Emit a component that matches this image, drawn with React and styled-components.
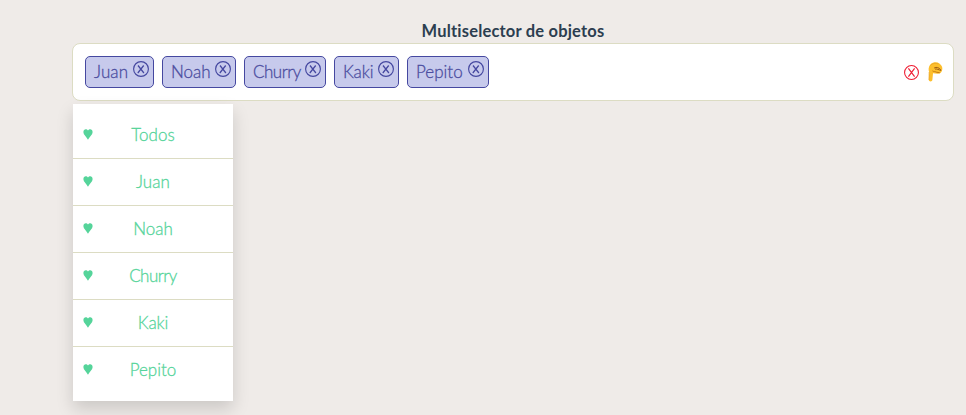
import React from 'react';
import styled, { createGlobalStyle } from 'styled-components';

const GlobalStyle = createGlobalStyle`
  * { box-sizing: border-box; }
  body {
    margin: 0;
    background: #efebe8;
    font-family: Lato, "Open Sans", sans-serif;
    font-size: 16px;
    color: #2c3e50;
    overflow: hidden;
    -webkit-font-smoothing: antialiased;
  }
`;

const Page = styled.main`
  height: 415px;
  padding: 20px 12px 0 72px;
`;

const Title = styled.h1`
  margin: 0;
  height: 23px;
  line-height: 23px;
  font-size: 16.5px;
  font-weight: 700;
  letter-spacing: 0.19px;
  text-align: center;
`;

const Field = styled.div`
  display: flex;
  align-items: center;
  justify-content: space-between;
  height: 58px;
  padding: 0 9px 0 12px;
  background: #fff;
  border: 1px solid #dcdcc3;
  border-radius: 8px;
`;

const Tags = styled.div`
  display: flex;
  gap: 8px;
`;

const Tag = styled.span`
  display: flex;
  justify-content: space-between;
  width: ${(p) => p.$width}px;
  height: 32px;
  padding: 0 4px 0 8px;
  line-height: 29px;
  font-size: 17px;
  font-weight: 300;
  letter-spacing: ${(p) => p.$tracking}px;
  white-space: nowrap;
  color: #4b4d9f;
  -webkit-text-stroke: 0.3px currentColor;
  background: #c7caec;
  border: 1px solid #4548a0;
  border-radius: 5px;
`;

const CloseMark = styled.svg`
  flex: none;
  width: ${(p) => p.$size}px;
  height: ${(p) => p.$size}px;
  margin-top: ${(p) => p.$top || 0}px;
  fill: none;
  stroke: ${(p) => p.$color};
`;

const Actions = styled.div`
  display: flex;
  align-items: center;
  gap: 7px;
`;

const Hand = styled.svg`
  width: 18px;
  height: 22px;
`;

const Menu = styled.ul`
  width: 160px;
  height: 297px;
  margin: 3px 0 0 1px;
  padding: 8px 0;
  list-style: none;
  background: #fff;
  box-shadow: 0 8px 16px rgba(0, 0, 0, 0.15);
`;

const Option = styled.li`
  display: grid;
  grid-template-columns: 30px 1fr 30px;
  align-items: center;
  height: 47px;
  color: #55d49a;
  border-bottom: 1px solid #dcdcc3;

  &:last-child {
    height: 46px;
    border-bottom: 0;
  }
`;

const Heart = styled.svg`
  width: 10px;
  height: 12px;
  margin: 0 0 2px 10px;
  fill: currentColor;
`;

const Label = styled.span`
  text-align: center;
  line-height: 22px;
  font-size: 17px;
  font-weight: 300;
  letter-spacing: ${(p) => p.$tracking}px;
  -webkit-text-stroke: 0.3px currentColor;
`;

const people = [
  { name: 'Juan', width: 69, tracking: 0.1 },
  { name: 'Noah', width: 74, tracking: 0 },
  { name: 'Churry', width: 82, tracking: -0.5 },
  { name: 'Kaki', width: 65, tracking: -0.1 },
  { name: 'Pepito', width: 82, tracking: 0 },
];

const options = [{ name: 'Todos', tracking: 0 }, ...people];

const crosses = {
  small: 'M5 4.500 10.900 12M10.700 4.500 4.800 12',
  large: 'M4.700 3.700 11.300 12.300M11.300 3.700 4.700 12.300',
};

function Close({ size, top, color, cross }) {
  return (
    <CloseMark $size={size} $top={top} $color={color} viewBox="0 0 16 16" role="img" aria-label="Quitar">
      <circle cx="8" cy="8" r="7.4" strokeWidth="1.15" />
      <path d={crosses[cross]} strokeWidth="1.25" />
    </CloseMark>
  );
}

export default function App() {
  return (
    <>
      <GlobalStyle />
      <Page>
        <Title>Multiselector de objetos</Title>
        <Field>
          <Tags>
            {people.map((p) => (
              <Tag key={p.name} $width={p.width} $tracking={p.tracking}>
                {p.name}
                <Close size={16} top={4} color="#4548a0" cross="small" />
              </Tag>
            ))}
          </Tags>
          <Actions>
            <Close size={15} color="#ee1c32" cross="large" />
            <Hand viewBox="0 0 18 22" aria-hidden="true">
              <path
                d="M3.200 11.200C2.200 9 2.400 5.300 4.600 3.300 7 1 11 .8 13.400 2.400 16.300 4.300 17 7.500 15.900 9.800 15.300 12 13.600 12.900 11.500 12.700L7 12.300 6.400 18.800C6.300 21.100 2.800 21 2.800 18.800Z"
                fill="#fdbf2d"
              />
              <path d="M3.200 11 3.100 19M4.200 4.600C6.500 2.300 9.500 1.700 12.500 3" fill="none" stroke="#e9a52a" strokeWidth=".8" />
              <path d="M8.500 6.800C10.500 5.600 12.800 6.600 14.500 8.400M9.500 8C11 7.600 12.500 8.800 14.800 9.400" fill="none" stroke="#9b5b14" strokeWidth="1" strokeLinecap="round" />
              <path d="M6.500 9.900C8 11 9 10.200 10.200 11.100L13.800 11.800" fill="none" stroke="#c37816" strokeWidth="1" />
            </Hand>
          </Actions>
        </Field>
        <Menu>
          {options.map((o) => (
            <Option key={o.name}>
              <Heart viewBox="0 0 10 12" aria-hidden="true">
                <path d="M5 11.800C4 9 .4 7 .4 3.900.4.900 3.800.600 5 2.600 6.200.600 9.600.900 9.600 3.900 9.600 7 6 9 5 11.800Z" />
              </Heart>
              <Label $tracking={o.tracking}>{o.name}</Label>
            </Option>
          ))}
        </Menu>
      </Page>
    </>
  );
}
